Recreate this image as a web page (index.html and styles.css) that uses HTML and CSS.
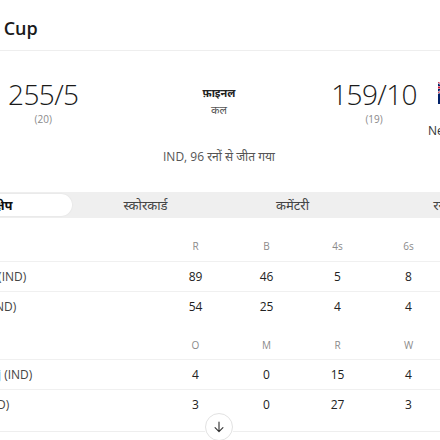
FILE: index.html
```html
<!DOCTYPE html>
<html lang="hi">
<head>
<meta charset="utf-8">
<title>World Cup</title>
<link rel="stylesheet" href="styles.css">
</head>
<body>
<div class="card">
  <header class="card-head">
    <h1 class="title">World Cup</h1>
  </header>

  <section class="match">
    <div class="side side-left">
      <div class="team">
        <svg class="flag" viewBox="0 0 32 22" aria-hidden="true">
          <rect width="32" height="7.34" fill="#ff9933"/>
          <rect y="7.33" width="32" height="7.34" fill="#ffffff"/>
          <rect y="14.66" width="32" height="7.34" fill="#138808"/>
          <circle cx="16" cy="11" r="2.6" fill="none" stroke="#000080" stroke-width="0.6"/>
        </svg>
        <span class="team-name">India</span>
      </div>
      <div class="score">
        <div class="runs">255/5</div>
        <div class="overs">(20)</div>
      </div>
    </div>

    <div class="status">
      <div class="stage">फ़ाइनल</div>
      <div class="when">कल</div>
    </div>

    <div class="side side-right">
      <div class="score">
        <div class="runs">159/10</div>
        <div class="overs">(19)</div>
      </div>
      <div class="team">
        <svg class="flag" viewBox="0 0 32 22" aria-hidden="true">
          <rect width="32" height="22" fill="#012169"/>
          <path d="M0 0 L16 11 M16 0 L0 11" stroke="#ffffff" stroke-width="2.2"/>
          <path d="M0 0 L16 11 M16 0 L0 11" stroke="#c8102e" stroke-width="0.9"/>
          <path d="M8 0 V11 M0 5.5 H16" stroke="#ffffff" stroke-width="3.2"/>
          <path d="M8 0 V11 M0 5.5 H16" stroke="#c8102e" stroke-width="1.8"/>
          <circle cx="24" cy="6" r="1.1" fill="#c8102e"/>
          <circle cx="21" cy="10" r="1.1" fill="#c8102e"/>
          <circle cx="27" cy="9.5" r="1.1" fill="#c8102e"/>
          <circle cx="24" cy="16" r="1.1" fill="#c8102e"/>
        </svg>
        <span class="team-name">New Zealand</span>
      </div>
    </div>
  </section>

  <p class="result">IND, 96 रनों से जीत गया</p>

  <nav class="tabs">
    <div class="tab tab-active">संक्षेप</div>
    <div class="tab">स्कोरकार्ड</div>
    <div class="tab">कमेंटरी</div>
    <div class="tab">रन</div>
  </nav>

  <div class="stats batting">
    <div class="row row-head">
      <div class="cell name"></div>
      <div class="cell">R</div>
      <div class="cell">B</div>
      <div class="cell">4s</div>
      <div class="cell">6s</div>
      <div class="cell">SR</div>
    </div>
    <div class="row">
      <div class="cell name">A Sharma (IND)</div>
      <div class="cell">89</div>
      <div class="cell">46</div>
      <div class="cell">5</div>
      <div class="cell">8</div>
      <div class="cell">193.47</div>
    </div>
    <div class="row">
      <div class="cell name">I Kishan (IND)</div>
      <div class="cell">54</div>
      <div class="cell">25</div>
      <div class="cell">4</div>
      <div class="cell">4</div>
      <div class="cell">216.00</div>
    </div>
  </div>

  <div class="stats bowling">
    <div class="row row-head">
      <div class="cell name"></div>
      <div class="cell">O</div>
      <div class="cell">M</div>
      <div class="cell">R</div>
      <div class="cell">W</div>
      <div class="cell">Econ</div>
    </div>
    <div class="row">
      <div class="cell name">Mohd Siraj (IND)</div>
      <div class="cell">4</div>
      <div class="cell">0</div>
      <div class="cell">15</div>
      <div class="cell">4</div>
      <div class="cell">3.75</div>
    </div>
    <div class="row">
      <div class="cell name">D Jurel (IND)</div>
      <div class="cell">3</div>
      <div class="cell">0</div>
      <div class="cell">27</div>
      <div class="cell">3</div>
      <div class="cell">9.00</div>
    </div>
  </div>

  <div class="expand">
    <span class="expand-line"></span>
    <button class="expand-btn" type="button" aria-label="और दिखाएं">
      <svg viewBox="0 0 16 16" width="14" height="14" aria-hidden="true">
        <path d="M8 2.5 V13 M3.5 8.8 L8 13.3 L12.5 8.8" fill="none" stroke="#333" stroke-width="1.3" stroke-linecap="round" stroke-linejoin="round"/>
      </svg>
    </button>
    <span class="expand-line"></span>
  </div>
</div>
</body>
</html>
```

FILE: styles.css
```css
html, body {
  margin: 0;
  padding: 0;
  background: #ffffff;
}

body {
  overflow: hidden;
  font-family: "Open Sans", "Noto Sans", "Noto Sans Devanagari", sans-serif;
  color: #222222;
}

.card {
  width: 592px;
  margin-left: -77px;
}

/* header */
.card-head {
  padding: 16px 16px 10px 24px;
  border-bottom: 1px solid #eeeeee;
}

.title {
  margin: 0;
  font-size: 18px;
  line-height: 24px;
  font-weight: 600;
  color: #1a1a1a;
  white-space: nowrap;
}

/* match summary */
.match {
  display: grid;
  grid-template-columns: 1fr auto 1fr;
  align-items: start;
  padding: 27px 12px 0;
}

.side {
  display: flex;
  align-items: flex-start;
}

.side-left {
  justify-self: start;
  gap: 13px;
}

.side-right {
  justify-self: end;
  gap: 11px;
}

.team {
  display: flex;
  flex-direction: column;
  padding-top: 4px;
}

.side-left .team {
  width: 60px;
  align-items: center;
}

.side-right .team {
  width: 75px;
  align-items: flex-start;
}

.flag {
  width: 32px;
  height: 22px;
  display: block;
}

.side-right .flag {
  margin-left: 10px;
}

.team-name {
  margin-top: 19px;
  font-size: 12px;
  line-height: 16px;
  color: #333333;
  white-space: nowrap;
}

.score {
  display: flex;
  flex-direction: column;
  align-items: center;
}

.runs {
  font-size: 28px;
  line-height: 32px;
  font-weight: 300;
  color: #1a1a1a;
  letter-spacing: -0.6px;
}

.overs {
  margin-top: 2px;
  font-size: 10px;
  line-height: 14px;
  color: #8a8a8a;
}

.status {
  margin-top: 7px;
  display: flex;
  flex-direction: column;
  align-items: center;
  gap: 1px;
}

.stage {
  font-size: 11px;
  line-height: 16px;
  font-weight: 700;
  color: #222222;
}

.when {
  font-size: 11px;
  line-height: 16px;
  color: #555555;
}

.result {
  margin: 10px 0 27px;
  text-align: center;
  font-size: 12px;
  line-height: 16px;
  color: #555555;
}

/* tabs */
.tabs {
  display: flex;
  padding: 2px;
  height: 22px;
  background: #efefef;
}

.tab {
  flex: 1;
  display: flex;
  align-items: center;
  justify-content: center;
  font-size: 13px;
  color: #444444;
  border-radius: 11px;
}

.tab-active {
  background: #ffffff;
  font-weight: 700;
  color: #111111;
  box-shadow: 0 0 2px rgba(0, 0, 0, 0.08);
}

/* stats tables */
.stats {
  margin-top: 13px;
}

.bowling {
  margin-top: 9px;
}

.row {
  display: grid;
  grid-template-columns: 237px repeat(5, 71px);
  height: 29px;
  align-items: center;
  border-top: 1px solid #f0f0f0;
}

.row-head {
  border-top: none;
  height: 30px;
  font-size: 10px;
  color: #8a8a8a;
}

.bowling .row-head {
  height: 29px;
}

.row:not(.row-head) {
  font-size: 12px;
  color: #222222;
}

.cell {
  text-align: center;
  white-space: nowrap;
}

.cell.name {
  text-align: left;
  padding-left: 18px;
  color: #444444;
}

/* expand */
.expand {
  margin-top: -6px;
  display: flex;
  align-items: flex-start;
  height: 28px;
}

.expand-line {
  flex: 1;
  height: 1px;
  margin-top: 18px;
  background: #eeeeee;
}

.expand-btn {
  width: 28px;
  height: 28px;
  padding: 0;
  border: 1px solid #e2e2e2;
  border-radius: 50%;
  background: #ffffff;
  display: flex;
  align-items: center;
  justify-content: center;
}
```
